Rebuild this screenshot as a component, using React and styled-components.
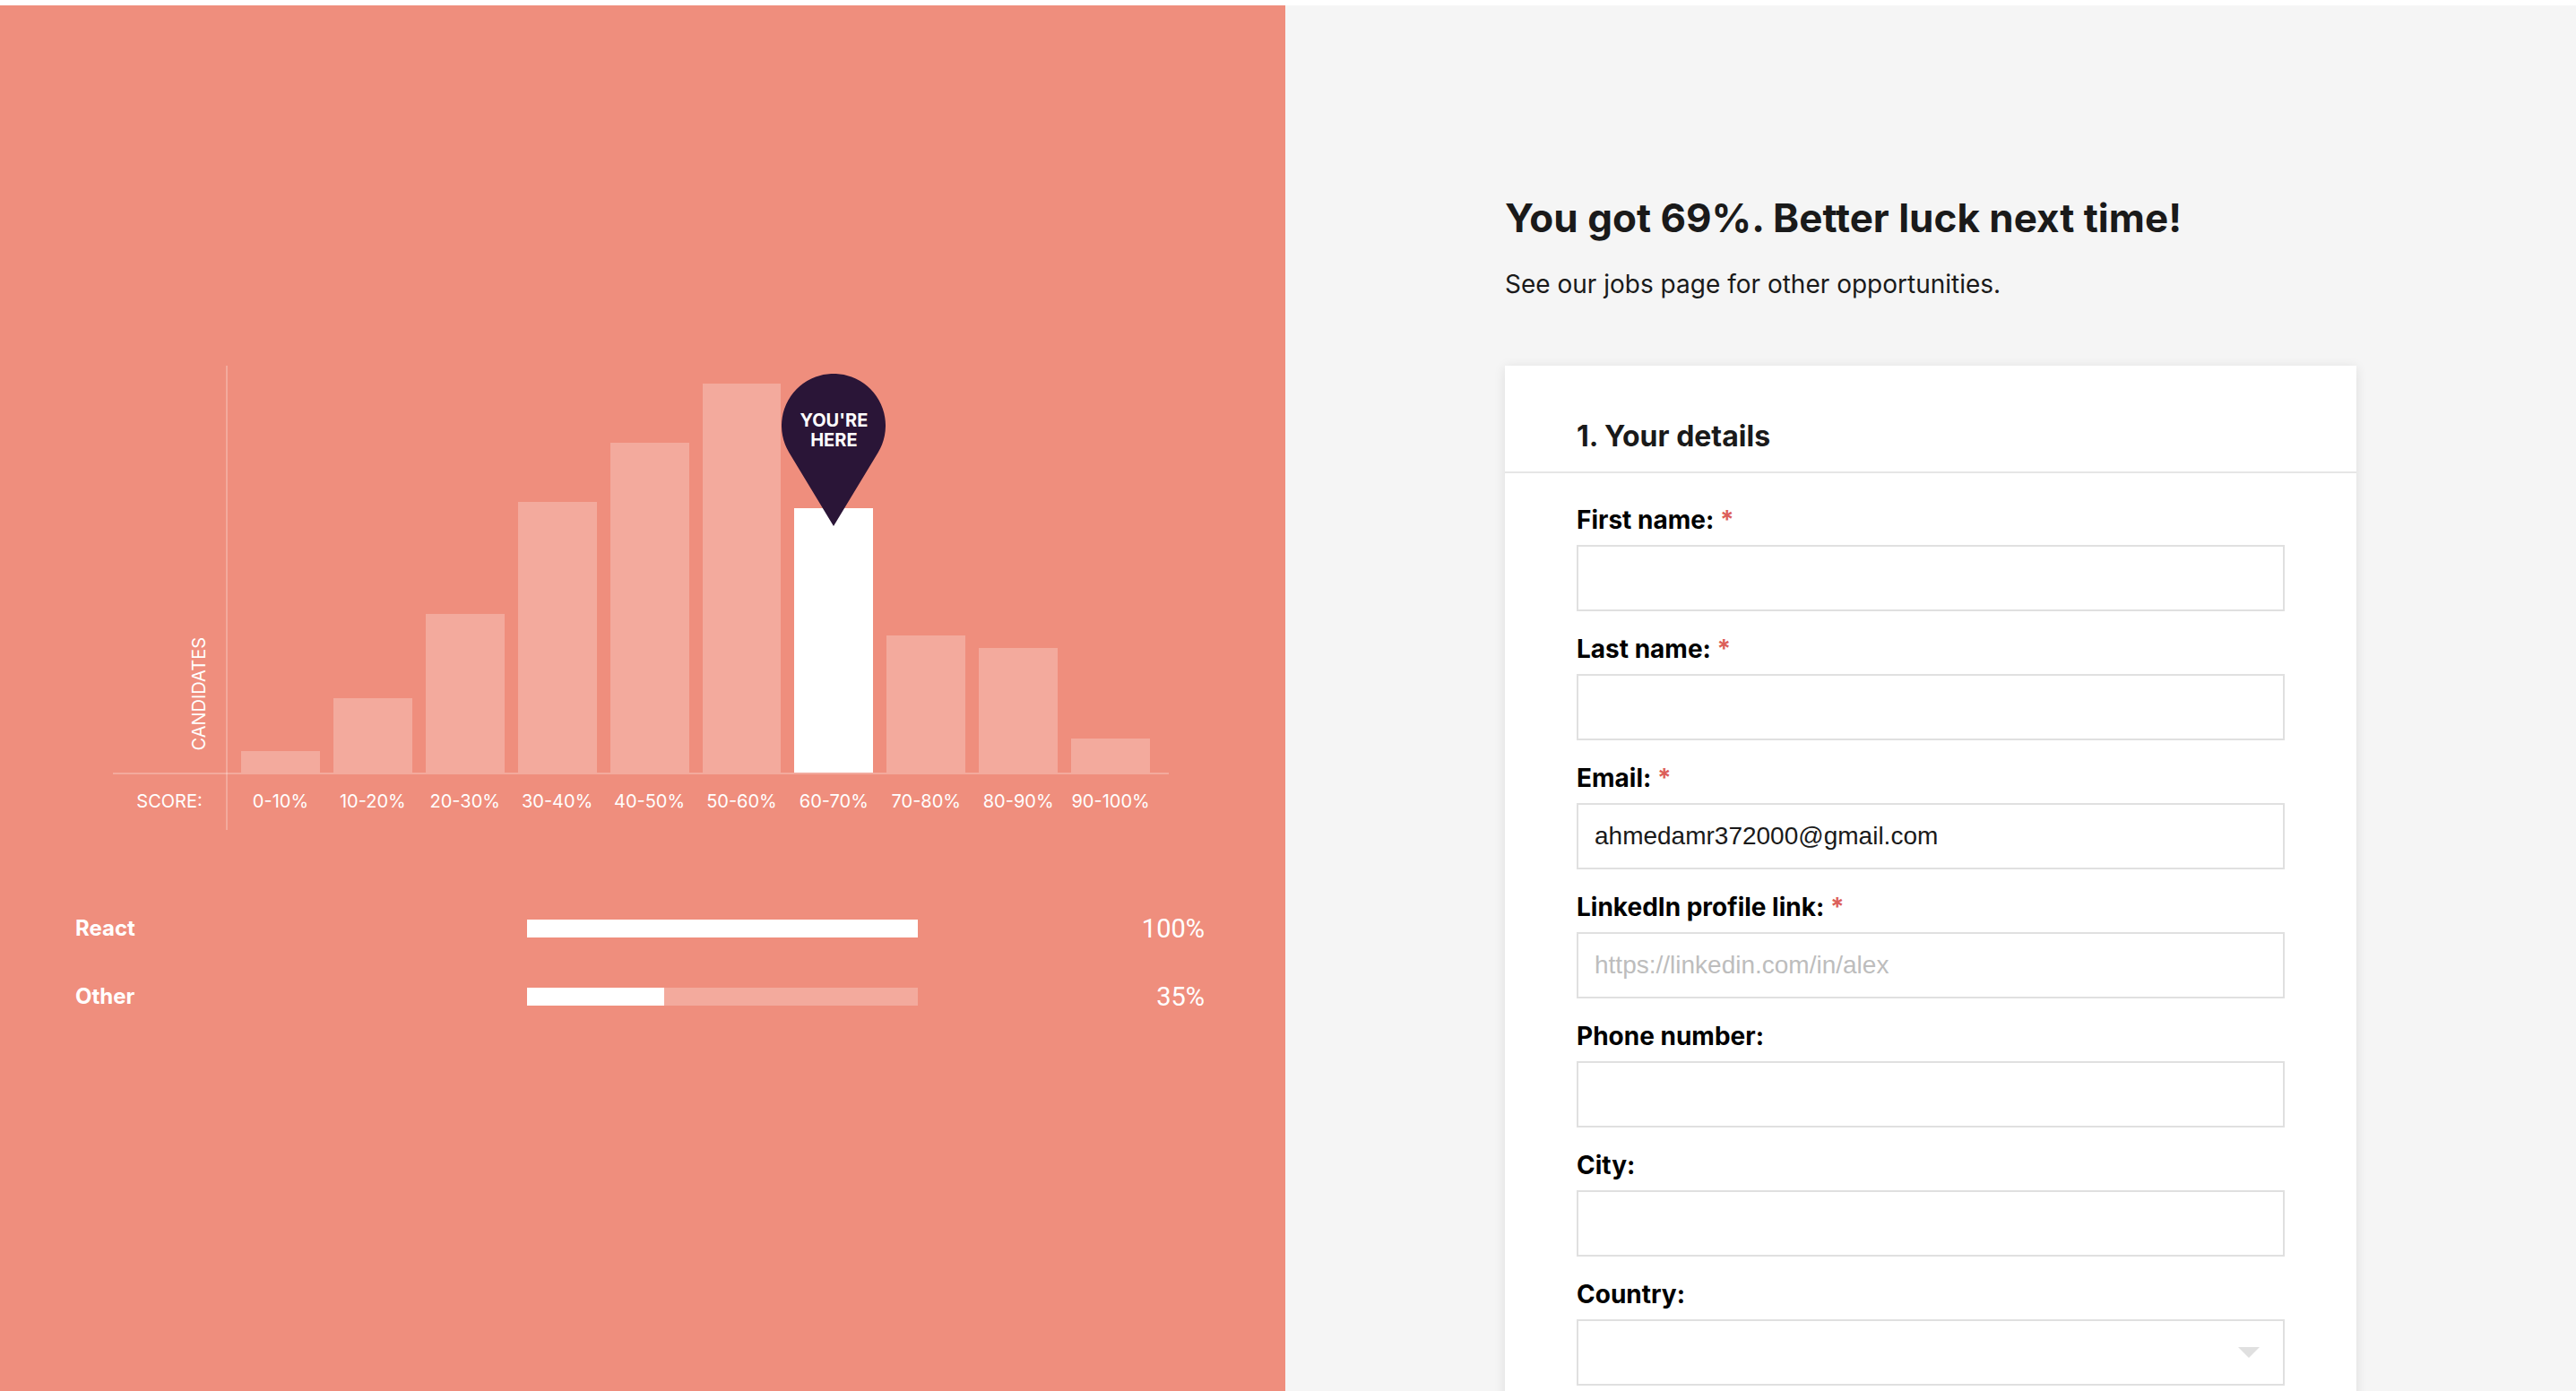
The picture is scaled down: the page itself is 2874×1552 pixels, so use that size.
import React from "react";
import styled, { createGlobalStyle } from "styled-components";

const GlobalStyle = createGlobalStyle`
  *, *::before, *::after { box-sizing: border-box; }
  body {
    margin: 0;
    background: #ffffff;
    font-family: Inter, "Liberation Sans", sans-serif;
    color: #1a1a1a;
  }
`;

const Page = styled.main`
  display: grid;
  grid-template-columns: minmax(0, 239fr) minmax(0, 240fr);
  height: 100vh;
  padding-top: 6px;
`;

const ResultsPanel = styled.section`
  display: flex;
  flex-direction: column;
  gap: 90px;
  padding: 402px 90px 0 84px;
  background: #ef8e7d;
  color: #ffffff;
  overflow: hidden;
`;

const Chart = styled.div`
  display: grid;
  grid-template-columns: 126px 2px minmax(0, 1fr);
  grid-template-rows: 454px 2px 62px;
  margin: 0 40px 0 42px;
  font-size: 20px;
  line-height: 24px;
`;

const VerticalAxis = styled.div`
  grid-column: 2;
  grid-row: 1 / -1;
  background: rgba(255, 255, 255, 0.25);
`;

const HorizontalAxis = styled.div`
  grid-column: 1 / -1;
  grid-row: 2;
  background: rgba(255, 255, 255, 0.25);
`;

const CandidatesLabel = styled.div`
  grid-column: 1;
  grid-row: 1;
  place-self: end;
  margin: 0 18px 24px 0;
  writing-mode: vertical-rl;
  transform: rotate(180deg);
`;

const ScoreLabel = styled.div`
  grid-column: 1;
  grid-row: 3;
  padding-top: 18px;
  text-align: center;
`;

const Columns = styled.div`
  grid-column: 3;
  grid-row: ${(p) => p.$row};
  display: grid;
  grid-template-columns: repeat(10, minmax(0, 1fr));
  column-gap: 15px;
  align-items: ${(p) => p.$align};
  padding: 0 21px 0 15px;
`;

const Bar = styled.div`
  position: relative;
  background: ${(p) => (p.$active ? "#ffffff" : "rgba(255, 255, 255, 0.25)")};
`;

const Tick = styled.div`
  padding-top: 18px;
  text-align: center;
  white-space: nowrap;
`;

const Pin = styled.div`
  position: absolute;
  z-index: 1;
  left: 50%;
  bottom: calc(100% - 20px);
  width: 116px;
  height: 170px;
  transform: translateX(-50%);
`;

const PinShape = styled.svg`
  display: block;
  width: 100%;
  height: 100%;
`;

const PinText = styled.div`
  position: absolute;
  inset: 41px 0 auto;
  text-align: center;
  font-size: 20px;
  line-height: 22px;
  font-weight: 700;
`;

const Skills = styled.div`
  display: flex;
  flex-direction: column;
  gap: 36px;
`;

const SkillRow = styled.div`
  display: grid;
  grid-template-columns: 126fr 109fr 80fr;
  align-items: center;
  height: 40px;
`;

const SkillName = styled.div`
  font-size: 24px;
  line-height: 40px;
  font-weight: 700;
`;

const Track = styled.div`
  height: 20px;
  background: rgba(255, 255, 255, 0.25);
`;

const Fill = styled.div`
  height: 100%;
  background: #ffffff;
`;

const SkillScore = styled.div`
  font-family: Roboto, "Liberation Sans", sans-serif;
  font-size: 29px;
  line-height: 40px;
  text-align: right;
`;

const FormPanel = styled.section`
  background: #f5f5f5;
  overflow-y: auto;
  scrollbar-width: none;
`;

const FormColumn = styled.div`
  max-width: 950px;
  margin: 0 auto;
  padding: 205px 0 120px;
`;

const Title = styled.h1`
  margin: 0;
  font-size: 44px;
  line-height: 64px;
  font-weight: 700;
`;

const Subtitle = styled.p`
  margin: 22px 0 0;
  font-size: 28px;
  line-height: 40px;
`;

const Card = styled.form`
  margin-top: 71px;
  background: #ffffff;
  box-shadow: 0 2px 12px rgba(0, 0, 0, 0.1);
`;

const CardTitle = styled.h2`
  margin: 0;
  padding: 59px 80px 19px;
  border-bottom: 2px solid #e6e6e6;
  font-size: 32px;
  line-height: 40px;
  font-weight: 700;
`;

const Fields = styled.div`
  display: flex;
  flex-direction: column;
  gap: 22px;
  padding: 32px 80px 80px;
`;

const Field = styled.div`
  display: flex;
  flex-direction: column;
  gap: 8px;
`;

const Label = styled.label`
  font-size: 28px;
  line-height: 40px;
  font-weight: 700;
  color: #000000;
`;

const Required = styled.span`
  color: #dc5f5a;
`;

const Input = styled.input`
  width: 100%;
  height: 74px;
  padding: 0 18px;
  border: 2px solid #e0e0e0;
  border-radius: 0;
  background: #ffffff;
  font-family: "Liberation Sans", Arial, sans-serif;
  font-size: 28px;
  color: #1a1a1a;
  &::placeholder {
    color: #bdbdbd;
    opacity: 1;
  }
`;

const SelectBox = styled.div`
  display: grid;
  align-items: center;
`;

const Select = styled(Input)`
  grid-area: 1 / 1;
  appearance: none;
`;

const Arrow = styled.svg`
  grid-area: 1 / 1;
  justify-self: end;
  width: 24px;
  height: 12px;
  margin-right: 28px;
  pointer-events: none;
`;

const BUCKETS = [
  { label: "0-10%", height: 24 },
  { label: "10-20%", height: 83 },
  { label: "20-30%", height: 177 },
  { label: "30-40%", height: 302 },
  { label: "40-50%", height: 368 },
  { label: "50-60%", height: 434 },
  { label: "60-70%", height: 295, active: true },
  { label: "70-80%", height: 153 },
  { label: "80-90%", height: 139 },
  { label: "90-100%", height: 38 },
];

const SKILLS = [
  { name: "React", score: 100 },
  { name: "Other", score: 35 },
];

const FIELDS = [
  { id: "first-name", label: "First name:", required: true },
  { id: "last-name", label: "Last name:", required: true },
  { id: "email", label: "Email:", required: true, type: "email", value: "ahmedamr372000@gmail.com" },
  { id: "linkedin", label: "LinkedIn profile link:", required: true, type: "url", placeholder: "https://linkedin.com/in/alex" },
  { id: "phone", label: "Phone number:", type: "tel" },
  { id: "city", label: "City:" },
];

function YouAreHere() {
  return (
    <Pin>
      <PinShape viewBox="0 0 116 170" aria-hidden="true">
        <path fill="#2a1537" d="M58 170 L8.4 88 A58 58 0 1 1 107.6 88 Z" />
      </PinShape>
      <PinText>
        YOU'RE
        <br />
        HERE
      </PinText>
    </Pin>
  );
}

export default function App() {
  return (
    <>
      <GlobalStyle />
      <Page>
        <ResultsPanel>
          <Chart>
            <CandidatesLabel>CANDIDATES</CandidatesLabel>
            <Columns $row={1} $align="end">
              {BUCKETS.map((b) => (
                <Bar key={b.label} $active={b.active} style={{ height: b.height }}>
                  {b.active && <YouAreHere />}
                </Bar>
              ))}
            </Columns>
            <VerticalAxis />
            <HorizontalAxis />
            <ScoreLabel>SCORE:</ScoreLabel>
            <Columns $row={3} $align="start">
              {BUCKETS.map((b) => (
                <Tick key={b.label}>{b.label}</Tick>
              ))}
            </Columns>
          </Chart>
          <Skills>
            {SKILLS.map((s) => (
              <SkillRow key={s.name}>
                <SkillName>{s.name}</SkillName>
                <Track>
                  <Fill style={{ width: `${s.score}%` }} />
                </Track>
                <SkillScore>{s.score}%</SkillScore>
              </SkillRow>
            ))}
          </Skills>
        </ResultsPanel>
        <FormPanel>
          <FormColumn>
            <Title>You got 69%. Better luck next time!</Title>
            <Subtitle>See our jobs page for other opportunities.</Subtitle>
            <Card>
              <CardTitle>1. Your details</CardTitle>
              <Fields>
                {FIELDS.map((f) => (
                  <Field key={f.id}>
                    <Label htmlFor={f.id}>
                      {f.label} {f.required && <Required>*</Required>}
                    </Label>
                    <Input
                      id={f.id}
                      type={f.type || "text"}
                      defaultValue={f.value}
                      placeholder={f.placeholder}
                    />
                  </Field>
                ))}
                <Field>
                  <Label htmlFor="country">Country:</Label>
                  <SelectBox>
                    <Select as="select" id="country" defaultValue="">
                      <option value="" />
                    </Select>
                    <Arrow viewBox="0 0 24 12" aria-hidden="true">
                      <path fill="#e0e0e0" d="M0 0 H24 L12 12 Z" />
                    </Arrow>
                  </SelectBox>
                </Field>
              </Fields>
            </Card>
          </FormColumn>
        </FormPanel>
      </Page>
    </>
  );
}
